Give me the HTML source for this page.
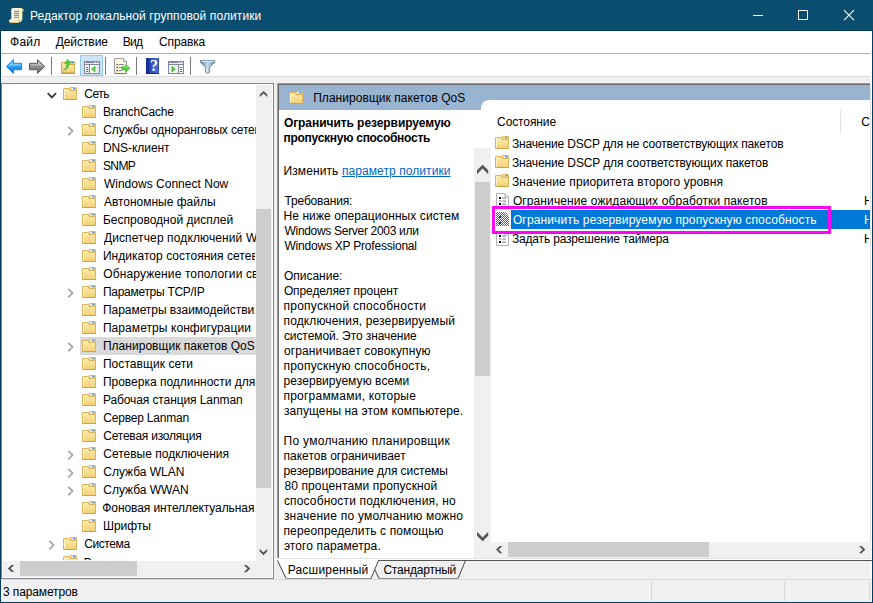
<!DOCTYPE html>
<html lang="ru"><head><meta charset="utf-8"><title>Редактор локальной групповой политики</title>
<style>
html,body{margin:0;padding:0}
body{width:873px;height:603px;position:relative;overflow:hidden;background:#f0f0f0;font-family:"Liberation Sans",sans-serif;font-size:12px;color:#000}
.ab{position:absolute;display:block}
.tx{position:absolute;white-space:nowrap;height:18px;line-height:18px;font-size:12px}
.wht{color:#fff}
.b{font-weight:bold}
.lnk{color:#0066cc;text-decoration:underline}
.tsel{position:absolute;background:#d9d9d9}
</style></head>
<body>
<svg width="0" height="0" style="position:absolute">
<defs>
<linearGradient id="fg" x1="0" y1="0" x2="0" y2="1"><stop offset="0" stop-color="#fdeeb0"/><stop offset="1" stop-color="#f1cf74"/></linearGradient>
<linearGradient id="bl" x1="0" y1="0" x2="0" y2="1"><stop offset="0" stop-color="#7fd0ff"/><stop offset="0.5" stop-color="#2a9df4"/><stop offset="1" stop-color="#0b6fd0"/></linearGradient>
<linearGradient id="gr" x1="0" y1="0" x2="0" y2="1"><stop offset="0" stop-color="#c8c8c8"/><stop offset="0.5" stop-color="#8c8c8c"/><stop offset="1" stop-color="#6e6e6e"/></linearGradient>
<linearGradient id="hb" x1="0" y1="0" x2="1" y2="0"><stop offset="0" stop-color="#1c2f9c"/><stop offset="1" stop-color="#4d7be0"/></linearGradient>
<linearGradient id="fu" x1="0" y1="0" x2="1" y2="0"><stop offset="0" stop-color="#5c7f9c"/><stop offset="0.5" stop-color="#c5d8e6"/><stop offset="1" stop-color="#6e8fa8"/></linearGradient>
<pattern id="dith" width="2" height="2" patternUnits="userSpaceOnUse"><rect width="2" height="2" fill="#fff"/><rect width="1" height="1" fill="#0078d7"/><rect x="1" y="1" width="1" height="1" fill="#0078d7"/></pattern>
<symbol id="fold" viewBox="0 0 14 14">
<path d="M7 3.5 V1 Q7 0.5 7.5 0.5 H13 Q13.5 0.5 13.5 1 V4 Z" fill="#f3d88a" stroke="#dcb660" stroke-width="1"/>
<rect x="8.5" y="1" width="2" height="1.2" fill="#fff"/><rect x="10.3" y="1" width="2" height="1.2" fill="#3b8ae6"/>
<path d="M0.5 2 Q0.5 1.5 1 1.5 H6 L7 3.5 H13.5 V12.5 H0.5 Z" fill="url(#fg)" stroke="#dab45c" stroke-width="1"/>
<path d="M1.5 2.5 V11.5" stroke="#fff4c8" stroke-width="1" fill="none"/>
<path d="M0.5 12.5 H13.5" stroke="#c9a349" stroke-width="1"/>
</symbol>
<symbol id="pol" viewBox="0 0 16 16">
<path d="M1.5 0.5 H10 L13.5 4 V14.5 H1.5 Z" fill="#fff" stroke="#b0b0b0" stroke-width="1"/>
<path d="M10 0.5 V4 H13.5" fill="none" stroke="#b0b0b0" stroke-width="1"/>
<rect x="4" y="4" width="2" height="2" fill="#111"/><rect x="4" y="7.2" width="2" height="1.4" fill="#8b8bb0"/><rect x="4" y="10" width="2" height="2" fill="#111"/>
<rect x="7" y="4.6" width="4" height="1" fill="#77779a"/><rect x="7" y="7.6" width="4" height="1" fill="#77779a"/><rect x="7" y="10.6" width="4" height="1" fill="#77779a"/>
</symbol>
<symbol id="polsel" viewBox="0 0 16 16">
<path d="M1 0 H10 L14 4 V14 H1 Z" fill="url(#dith)"/>
<rect x="4" y="4" width="2" height="2" fill="#0a3a80"/><rect x="4" y="10" width="2" height="2" fill="#0a3a80"/>
</symbol>
</defs>
</svg>

<!-- title bar -->
<div class="ab" style="left:0;top:0;width:873px;height:31px;background:#0a4d6e"></div>
<div class="ab" style="left:0;top:30px;width:873px;height:1px;background:#023b5c"></div>
<!-- window borders -->
<div class="ab" style="left:0;top:31px;width:1px;height:572px;background:#043e5f"></div>
<div class="ab" style="left:872px;top:31px;width:1px;height:572px;background:#043e5f"></div>
<div class="ab" style="left:0;top:602px;width:873px;height:1px;background:#043e5f"></div>
<!-- menu bar -->
<div class="ab" style="left:1px;top:31px;width:871px;height:22px;background:#fff"></div>
<div class="ab" style="left:1px;top:53px;width:869px;height:1px;background:#b0b0b0"></div>
<div class="ab" style="left:870px;top:53px;width:2px;height:1px;background:#fff"></div>
<!-- toolbar -->
<div class="ab" style="left:1px;top:54px;width:871px;height:22px;background:#fff"></div>
<div class="ab" style="left:2px;top:76px;width:868px;height:1px;background:#dcdcdc"></div>
<div class="ab" style="left:1px;top:76px;width:1px;height:7px;background:#fff"></div>
<div class="ab" style="left:870px;top:76px;width:2px;height:502px;background:#fff"></div>
<!-- tree pane -->
<div class="ab" style="left:1px;top:83px;width:273px;height:496px;background:#fff;border:1px solid #828790;box-sizing:border-box"></div>
<!-- right pane frame -->
<div class="ab" style="left:277px;top:83px;width:593px;height:475px;background:#a0a0a0"></div>
<div class="ab" style="left:278px;top:84px;width:592px;height:474px;background:#696969"></div>
<div class="ab" style="left:279px;top:85px;width:591px;height:473px;background:#fff"></div>
<div class="ab" style="left:870px;top:85px;width:1px;height:473px;background:#e3e3e3"></div>
<!-- header -->
<div class="ab" style="left:279px;top:85px;width:591px;height:25px;background:#99b4d1"></div>
<div class="ab" style="left:481px;top:100px;width:389px;height:20px;background:#fff;border-top-left-radius:8px"></div>
<svg class="ab" style="left:289px;top:91px" width="14" height="14" viewBox="0 0 14 14"><use href="#fold"/></svg>
<!-- desc scrollbar -->
<div class="ab" style="left:474px;top:148px;width:17px;height:410px;background:#f0f0f0"></div>
<div class="ab" style="left:475px;top:182px;width:15px;height:194px;background:#cdcdcd"></div>
<!-- list header separator -->
<div class="ab" style="left:840px;top:110px;width:1px;height:24px;background:#e5e5e5"></div>
<!-- list h scrollbar -->
<div class="ab" style="left:491px;top:542px;width:380px;height:16px;background:#f0f0f0"></div>
<div class="ab" style="left:508px;top:542px;width:201px;height:15px;background:#cdcdcd"></div>
<svg class="ab" style="left:470px;top:140px" width="410" height="430" viewBox="470 140 410 430"><g fill="#555">
<path d="M477 170.3 L482.6 164.7 L488.2 170.3 V174.2 L482.6 168.6 L477 174.2 Z"/>
<path d="M477 531.8 V535.7 L482.6 541.3 L488.2 535.7 V531.8 L482.6 537.4 Z"/>
<path d="M502.4 546 H499.7 L496 549.6 L499.7 553.2 H502.4 L498.7 549.6 Z"/>
<path d="M858.9 546 H861.6 L865.3 549.6 L861.6 553.2 H858.9 L862.6 549.6 Z"/>
</g></svg>
<!-- bottom of right pane -->
<div class="ab" style="left:279px;top:558px;width:591px;height:1px;background:#e3e3e3"></div>
<div class="ab" style="left:277px;top:559px;width:593px;height:1px;background:#fff"></div>
<div class="ab" style="left:378px;top:560px;width:494px;height:1px;background:#555"></div>
<!-- tabs -->
<svg class="ab" style="left:274px;top:558px" width="200" height="22" viewBox="0 0 200 22">
<path d="M3.5 1 L12 20.5 H97 L104.5 2.5 Z" fill="#fff"/>
<path d="M3.5 2.5 L12 20.5" stroke="#444" stroke-width="1" fill="none"/>
<path d="M12 20.5 H97.5" stroke="#8c8c8c" stroke-width="1" fill="none"/>
<path d="M97 20.5 L104.5 2.5" stroke="#444" stroke-width="1" fill="none"/>
<path d="M101 12 L105 20.5 H184 L191.5 2.5" stroke="#444" stroke-width="1" fill="none"/>
<path d="M105 20.5 H184" stroke="#8c8c8c" stroke-width="1" fill="none"/>
</svg>
<!-- status bar -->
<div class="ab" style="left:1px;top:579px;width:871px;height:1px;background:#dadada"></div>
<div class="ab" style="left:651px;top:582px;width:1px;height:19px;background:#d7d7d7"></div>
<div class="ab" style="left:784px;top:582px;width:1px;height:19px;background:#d7d7d7"></div>
<div class="ab" style="left:869px;top:582px;width:1px;height:19px;background:#d7d7d7"></div>
<svg class="ab" style="left:0;top:54px" width="222" height="24" viewBox="0 54 222 24">
<!-- back -->
<path d="M6.3 66.5 L13.5 59.6 V63.3 H21.5 V69.7 H13.5 V73.4 Z" fill="url(#bl)" stroke="#2286dc" stroke-width="1" stroke-linejoin="round"/>
<path d="M8 66.3 L12.6 62 V64.3 H20.5 V65.6 H12 Z" fill="#9adcff" opacity="0.8"/>
<!-- forward -->
<path d="M44.7 66.5 L37.5 59.6 V63.3 H29.5 V69.7 H37.5 V73.4 Z" fill="url(#gr)" stroke="#5c5c5c" stroke-width="1" stroke-linejoin="round"/>
<path d="M43 66.3 L38.4 62 V64.3 H30.5 V65.6 H39 Z" fill="#d0d0d0" opacity="0.7"/>
<!-- separators -->
<path d="M51.5 57 V75 M105.5 57 V75 M136.5 57 V75 M190.5 57 V75" stroke="#7a7a7a" stroke-width="1"/>
<!-- up folder -->
<g transform="translate(61,60.5)">
<path d="M7 3.5 V1.5 Q7 1 7.5 1 H13 Q13.5 1 13.5 1.5 V4 Z" fill="#f3d88a" stroke="#d3ab52" stroke-width="1"/>
<rect x="10.5" y="1.5" width="2" height="1.2" fill="#3b8ae6"/>
<path d="M0.5 2.5 Q0.5 2 1 2 H6 L7 4 H13.5 V12.7 H0.5 Z" fill="url(#fg)" stroke="#d3ab52" stroke-width="1"/>
<path d="M0.5 12.7 H13.5" stroke="#b98f3a" stroke-width="1"/>
<path d="M2.2 9.8 Q6.3 7.6 5.6 3 L3.6 3.4 L6.3 -1.2 L9.7 2.4 L7.8 2.6 Q8.4 8.6 2.2 9.8 Z" fill="#55cc40" stroke="#35a825" stroke-width="0.5"/>
</g>
<!-- highlighted button -->
<rect x="80.5" y="55.5" width="22" height="20" fill="#cce4f7" stroke="#92c8f3" stroke-width="1"/>
<!-- show/hide tree icon -->
<g transform="translate(84,61)">
<rect x="0.5" y="0.5" width="15" height="12" fill="#fff" stroke="#82879c" stroke-width="1"/>
<rect x="1" y="1" width="14" height="3.4" fill="#e9ebf2"/>
<path d="M1.5 1.5 H10.5 M12 1.5 H13 M14 1.5 H14.5" stroke="#82879c" stroke-width="1"/>
<path d="M1 3.5 H15" stroke="#82879c" stroke-width="1"/>
<path d="M5.5 4 V12" stroke="#82879c" stroke-width="1"/>
<path d="M2 6.5 H4.4 M2 8.5 H4.4 M2 10.5 H4.4" stroke="#2a6fd8" stroke-width="1"/>
<rect x="12" y="5" width="3" height="7" fill="#ededed"/>
<path d="M11 5.5 V10.8 L7.6 8.1 Z" fill="#6fd05a" stroke="#2fa81f" stroke-width="0.8"/>
</g>
<!-- export list -->
<g transform="translate(114,58)">
<path d="M0.5 0.5 H9.5 L12.5 3.5 V15.5 H0.5 Z" fill="#fdf7df" stroke="#9c9c9c" stroke-width="1"/>
<path d="M9.5 0.5 V3.5 H12.5" fill="#fff" stroke="#9c9c9c" stroke-width="1"/>
<path d="M0.5 15.5 H12.5" stroke="#777" stroke-width="1"/>
<rect x="2.6" y="6" width="1.2" height="1.2" fill="#222"/><rect x="2.6" y="9" width="1.2" height="1.2" fill="#222"/><rect x="2.6" y="12" width="1.2" height="1.2" fill="#222"/>
<path d="M5 6.6 H10 M5 9.6 H8 M5 12.6 H8" stroke="#7a78a8" stroke-width="1"/>
<path d="M8 8.7 H11.6 V6.4 L16 10.3 L11.6 14.2 V11.9 H8 Z" fill="#4ccb35" stroke="#3fb52b" stroke-width="0.5"/>
<path d="M9 9.8 H12.4 V8.6 L14.3 10.3 Z" fill="#a8ee98"/>
</g>
<!-- help -->
<g transform="translate(146,58)">
<rect x="0" y="0" width="13" height="16" fill="url(#hb)"/>
<rect x="0" y="0" width="3" height="16" fill="#1b2e98"/>
<rect x="0" y="15" width="13" height="1" fill="#15257e"/>
<rect x="12" y="0" width="1" height="16" fill="#2d49b4"/>
<text x="8" y="13.4" font-family="Liberation Serif, serif" font-weight="bold" font-size="16" fill="#fff" text-anchor="middle">?</text>
</g>
<!-- action pane icon -->
<g transform="translate(168,61)">
<rect x="0.5" y="0.5" width="15" height="12" fill="#fff" stroke="#82879c" stroke-width="1"/>
<rect x="1" y="1" width="14" height="3.4" fill="#e9ebf2"/>
<path d="M1.5 1.5 H10.5 M12 1.5 H13 M14 1.5 H14.5" stroke="#82879c" stroke-width="1"/>
<path d="M1 3.5 H15" stroke="#82879c" stroke-width="1"/>
<path d="M10.5 4 V12" stroke="#82879c" stroke-width="1"/>
<path d="M11.8 6.5 H14.2 M11.8 8.5 H14.2 M11.8 10.5 H14.2" stroke="#2a6fd8" stroke-width="1"/>
<rect x="1" y="5" width="9" height="7" fill="#f1f1f1"/>
<path d="M4 5.6 V10.8 L7.2 8.2 Z" fill="#6fd05a" stroke="#2fa81f" stroke-width="0.8"/>
</g>
<!-- filter funnel -->
<g transform="translate(200,60)">
<path d="M0.3 0.6 H14.7 V2.2 L9.4 7.6 V12.6 Q7.5 14 5.6 12.6 V7.6 L0.3 2.2 Z" fill="url(#fu)" stroke="#587a96" stroke-width="0.8"/>
<path d="M1.2 1.4 H13.8" stroke="#e6f0f6" stroke-width="1"/>
<path d="M7 8 V12.4" stroke="#e9f1f6" stroke-width="1.2"/>
</g>
</svg>
<!-- title icon -->
<svg class="ab" style="left:8px;top:6px" width="18" height="19" viewBox="8 6 18 19">
<defs><linearGradient id="pg" x1="0" y1="0" x2="1" y2="0"><stop offset="0" stop-color="#fffdf6"/><stop offset="1" stop-color="#fbefb4"/></linearGradient>
<linearGradient id="rl" x1="0" y1="0" x2="0" y2="1"><stop offset="0" stop-color="#f3dc96"/><stop offset="0.45" stop-color="#fffbe6"/><stop offset="1" stop-color="#e3bf62"/></linearGradient></defs>
<path d="M21.6 8.6 L23.4 8.9 Q24.4 9.6 23.8 10.8 L22.6 11.8 Z" fill="#d9ae45"/>
<path d="M11.3 9.6 Q11.4 8.2 13 8.1 H21.6 Q22.6 8.4 22.4 9.6 V19.6 L20.6 21.6 H11.3 Z" fill="url(#pg)"/>
<path d="M14 11.4 H19 M14 13.4 H19 M14 15.4 H19 M14 17.4 H19" stroke="#8c8cb4" stroke-width="1.1"/>
<path d="M20 19.4 L22.4 19.8 L20.4 22.4 Z" fill="#e9e4d4"/>
<rect x="9" y="19" width="11" height="3.9" rx="1.8" fill="url(#rl)"/>
<path d="M18.6 19.2 Q20.2 20.9 18.6 22.7" stroke="#b9a060" stroke-width="0.7" fill="none"/>
</svg>

<svg class="ab" style="left:47px;top:89.5px" width="10" height="10" viewBox="0 0 10 10"><path d="M0.7 3.2 L4.9 7.4 L9.1 3.2" fill="none" stroke="#3c3c3c" stroke-width="1.9"/></svg><svg class="ab" style="left:63px;top:87px" width="14" height="14" viewBox="0 0 14 14"><use href="#fold"/></svg><svg class="ab" style="left:82px;top:105px" width="14" height="14" viewBox="0 0 14 14"><use href="#fold"/></svg><svg class="ab" style="left:66.0px;top:126px" width="10" height="10" viewBox="0 0 10 10"><path d="M2.2 0.8 L6.6 5.1 L2.2 9.4" fill="none" stroke="#a8a8a8" stroke-width="1.8"/></svg><svg class="ab" style="left:82px;top:123px" width="14" height="14" viewBox="0 0 14 14"><use href="#fold"/></svg><svg class="ab" style="left:82px;top:141px" width="14" height="14" viewBox="0 0 14 14"><use href="#fold"/></svg><svg class="ab" style="left:82px;top:159px" width="14" height="14" viewBox="0 0 14 14"><use href="#fold"/></svg><svg class="ab" style="left:82px;top:177px" width="14" height="14" viewBox="0 0 14 14"><use href="#fold"/></svg><svg class="ab" style="left:82px;top:195px" width="14" height="14" viewBox="0 0 14 14"><use href="#fold"/></svg><svg class="ab" style="left:82px;top:213px" width="14" height="14" viewBox="0 0 14 14"><use href="#fold"/></svg><svg class="ab" style="left:82px;top:231px" width="14" height="14" viewBox="0 0 14 14"><use href="#fold"/></svg><svg class="ab" style="left:82px;top:249px" width="14" height="14" viewBox="0 0 14 14"><use href="#fold"/></svg><svg class="ab" style="left:82px;top:267px" width="14" height="14" viewBox="0 0 14 14"><use href="#fold"/></svg><svg class="ab" style="left:66.0px;top:288px" width="10" height="10" viewBox="0 0 10 10"><path d="M2.2 0.8 L6.6 5.1 L2.2 9.4" fill="none" stroke="#a8a8a8" stroke-width="1.8"/></svg><svg class="ab" style="left:82px;top:285px" width="14" height="14" viewBox="0 0 14 14"><use href="#fold"/></svg><svg class="ab" style="left:82px;top:303px" width="14" height="14" viewBox="0 0 14 14"><use href="#fold"/></svg><svg class="ab" style="left:82px;top:321px" width="14" height="14" viewBox="0 0 14 14"><use href="#fold"/></svg><div class="tsel" style="left:80px;top:337px;width:176px;height:18px"></div><svg class="ab" style="left:66.0px;top:342px" width="10" height="10" viewBox="0 0 10 10"><path d="M2.2 0.8 L6.6 5.1 L2.2 9.4" fill="none" stroke="#a8a8a8" stroke-width="1.8"/></svg><svg class="ab" style="left:82px;top:339px" width="14" height="14" viewBox="0 0 14 14"><use href="#fold"/></svg><svg class="ab" style="left:82px;top:357px" width="14" height="14" viewBox="0 0 14 14"><use href="#fold"/></svg><svg class="ab" style="left:82px;top:375px" width="14" height="14" viewBox="0 0 14 14"><use href="#fold"/></svg><svg class="ab" style="left:82px;top:393px" width="14" height="14" viewBox="0 0 14 14"><use href="#fold"/></svg><svg class="ab" style="left:82px;top:411px" width="14" height="14" viewBox="0 0 14 14"><use href="#fold"/></svg><svg class="ab" style="left:82px;top:429px" width="14" height="14" viewBox="0 0 14 14"><use href="#fold"/></svg><svg class="ab" style="left:66.0px;top:450px" width="10" height="10" viewBox="0 0 10 10"><path d="M2.2 0.8 L6.6 5.1 L2.2 9.4" fill="none" stroke="#a8a8a8" stroke-width="1.8"/></svg><svg class="ab" style="left:82px;top:447px" width="14" height="14" viewBox="0 0 14 14"><use href="#fold"/></svg><svg class="ab" style="left:66.0px;top:468px" width="10" height="10" viewBox="0 0 10 10"><path d="M2.2 0.8 L6.6 5.1 L2.2 9.4" fill="none" stroke="#a8a8a8" stroke-width="1.8"/></svg><svg class="ab" style="left:82px;top:465px" width="14" height="14" viewBox="0 0 14 14"><use href="#fold"/></svg><svg class="ab" style="left:66.0px;top:486px" width="10" height="10" viewBox="0 0 10 10"><path d="M2.2 0.8 L6.6 5.1 L2.2 9.4" fill="none" stroke="#a8a8a8" stroke-width="1.8"/></svg><svg class="ab" style="left:82px;top:483px" width="14" height="14" viewBox="0 0 14 14"><use href="#fold"/></svg><svg class="ab" style="left:82px;top:501px" width="14" height="14" viewBox="0 0 14 14"><use href="#fold"/></svg><svg class="ab" style="left:82px;top:519px" width="14" height="14" viewBox="0 0 14 14"><use href="#fold"/></svg><svg class="ab" style="left:46.5px;top:540px" width="10" height="10" viewBox="0 0 10 10"><path d="M2.2 0.8 L6.6 5.1 L2.2 9.4" fill="none" stroke="#a8a8a8" stroke-width="1.8"/></svg><svg class="ab" style="left:63px;top:537px" width="14" height="14" viewBox="0 0 14 14"><use href="#fold"/></svg><svg class="ab" style="left:63px;top:555px" width="14" height="14" viewBox="0 0 14 14"><use href="#fold"/></svg>
<svg class="ab" style="left:495px;top:136px" width="14" height="14" viewBox="0 0 14 14"><use href="#fold"/></svg><svg class="ab" style="left:495px;top:155px" width="14" height="14" viewBox="0 0 14 14"><use href="#fold"/></svg><svg class="ab" style="left:495px;top:174px" width="14" height="14" viewBox="0 0 14 14"><use href="#fold"/></svg><svg class="ab" style="left:495px;top:193px" width="16" height="16" viewBox="0 0 16 16"><use href="#pol"/></svg><div class="ab" style="left:511px;top:210px;width:359px;height:19px;background:#0078d7"></div><svg class="ab" style="left:495px;top:212px" width="16" height="16" viewBox="0 0 16 16"><use href="#polsel"/></svg><svg class="ab" style="left:495px;top:231px" width="16" height="16" viewBox="0 0 16 16"><use href="#pol"/></svg>
<div class="ab" style="left:256px;top:85px;width:16px;height:476px;background:#f0f0f0"></div>
<div class="ab" style="left:256px;top:209px;width:15px;height:279px;background:#cdcdcd"></div>
<!-- tree v-scroll arrows -->
<svg class="ab" style="left:256px;top:85px" width="17" height="476" viewBox="256 85 17 476"><g fill="#555">
<path d="M259.9 97.1 V94.4 L263.6 90.9 L267.3 94.4 V97.1 L263.6 93.6 Z"/>
<path d="M259.7 548.9 V551.6 L263.45 555.2 L267.2 551.6 V548.9 L263.45 552.5 Z"/>
</g></svg>

<div id="t0" class="tx wht" style="left:29.9px;top:7px;letter-spacing:0.097px;">Редактор локальной групповой политики</div>
<div id="t1" class="tx " style="left:10.1px;top:33px;letter-spacing:0.200px;">Файл</div>
<div id="t2" class="tx " style="left:55.7px;top:33px;letter-spacing:-0.071px;">Действие</div>
<div id="t3" class="tx " style="left:122.7px;top:33px;letter-spacing:-0.750px;">Вид</div>
<div id="t4" class="tx " style="left:159.1px;top:33px;letter-spacing:-0.150px;">Справка</div>
<div id="t5" class="tx tr" style="left:84.2px;top:85px;letter-spacing:-0.467px;width:171.4px;overflow:hidden;">Сеть</div>
<div id="t6" class="tx tr" style="left:102.9px;top:103px;letter-spacing:-0.170px;width:152.3px;overflow:hidden;">BranchCache</div>
<div id="t7" class="tx tr" style="left:103.3px;top:121px;letter-spacing:-0.150px;width:152.3px;overflow:hidden;">Службы одноранговых сетей Майкрософт</div>
<div id="t8" class="tx tr" style="left:102.9px;top:139px;letter-spacing:-0.056px;width:152.3px;overflow:hidden;">DNS-клиент</div>
<div id="t9" class="tx tr" style="left:102.9px;top:157px;letter-spacing:-0.567px;width:152.3px;overflow:hidden;">SNMP</div>
<div id="t10" class="tx tr" style="left:103.9px;top:175px;letter-spacing:0.017px;width:152.3px;overflow:hidden;">Windows Connect Now</div>
<div id="t11" class="tx tr" style="left:103.9px;top:193px;letter-spacing:-0.013px;width:152.3px;overflow:hidden;">Автономные файлы</div>
<div id="t12" class="tx tr" style="left:102.9px;top:211px;letter-spacing:0.016px;width:152.3px;overflow:hidden;">Беспроводной дисплей</div>
<div id="t13" class="tx tr" style="left:103.9px;top:229px;letter-spacing:0.120px;width:152.3px;overflow:hidden;">Диспетчер подключений Windows</div>
<div id="t14" class="tx tr" style="left:102.9px;top:247px;letter-spacing:0.033px;width:152.3px;overflow:hidden;">Индикатор состояния сетевого подключения</div>
<div id="t15" class="tx tr" style="left:103.3px;top:265px;letter-spacing:0.115px;width:152.3px;overflow:hidden;">Обнаружение топологии связи (Link-Layer)</div>
<div id="t16" class="tx tr" style="left:102.9px;top:283px;letter-spacing:-0.280px;width:152.3px;overflow:hidden;">Параметры TCP/IP</div>
<div id="t17" class="tx tr" style="left:102.9px;top:301px;letter-spacing:-0.032px;width:152.3px;overflow:hidden;">Параметры взаимодействия SSL</div>
<div id="t18" class="tx tr" style="left:102.9px;top:319px;letter-spacing:0.076px;width:152.3px;overflow:hidden;">Параметры конфигурации SSL</div>
<div id="t19" class="tx tr" style="left:102.9px;top:337px;letter-spacing:0.036px;width:152.3px;overflow:hidden;">Планировщик пакетов QoS</div>
<div id="t20" class="tx tr" style="left:102.9px;top:355px;letter-spacing:0.062px;width:152.3px;overflow:hidden;">Поставщик сети</div>
<div id="t21" class="tx tr" style="left:102.9px;top:373px;letter-spacing:-0.009px;width:152.3px;overflow:hidden;">Проверка подлинности для зоны хот-спота</div>
<div id="t22" class="tx tr" style="left:102.9px;top:391px;letter-spacing:-0.095px;width:152.3px;overflow:hidden;">Рабочая станция Lanman</div>
<div id="t23" class="tx tr" style="left:103.3px;top:409px;letter-spacing:-0.200px;width:152.3px;overflow:hidden;">Сервер Lanman</div>
<div id="t24" class="tx tr" style="left:103.3px;top:427px;letter-spacing:-0.227px;width:152.3px;overflow:hidden;">Сетевая изоляция</div>
<div id="t25" class="tx tr" style="left:103.3px;top:445px;letter-spacing:-0.006px;width:152.3px;overflow:hidden;">Сетевые подключения</div>
<div id="t26" class="tx tr" style="left:103.3px;top:463px;letter-spacing:-0.010px;width:152.3px;overflow:hidden;">Служба WLAN</div>
<div id="t27" class="tx tr" style="left:103.3px;top:481px;letter-spacing:-0.010px;width:152.3px;overflow:hidden;">Служба WWAN</div>
<div id="t28" class="tx tr" style="left:102.3px;top:499px;letter-spacing:-0.087px;width:152.3px;overflow:hidden;">Фоновая интеллектуальная служба передачи (BITS)</div>
<div id="t29" class="tx tr" style="left:102.9px;top:517px;letter-spacing:0.000px;width:152.3px;overflow:hidden;">Шрифты</div>
<div id="t30" class="tx tr" style="left:84.2px;top:535px;letter-spacing:-0.400px;width:171.4px;overflow:hidden;">Система</div>
<div id="t31" class="tx tr" style="left:83.8px;top:553.6px;letter-spacing:-0.031px;width:171.4px;overflow:hidden;">Все параметры</div>
<div id="t32" class="tx " style="left:313.2px;top:89px;letter-spacing:0.045px;">Планировщик пакетов QoS</div>
<div id="t33" class="tx b" style="left:283.9px;top:114px;letter-spacing:-0.061px;">Ограничить резервируемую</div>
<div id="t34" class="tx b" style="left:283.5px;top:129px;letter-spacing:-0.271px;">пропускную способность</div>
<div id="t35" class="tx " style="left:284.5px;top:192px;letter-spacing:-0.160px;">Требования:</div>
<div id="t36" class="tx " style="left:283.5px;top:207px;letter-spacing:0.077px;">Не ниже операционных систем</div>
<div id="t37" class="tx " style="left:284.5px;top:222px;letter-spacing:-0.305px;">Windows Server 2003 или</div>
<div id="t38" class="tx " style="left:284.5px;top:237px;letter-spacing:-0.214px;">Windows XP Professional</div>
<div id="t39" class="tx " style="left:283.9px;top:267px;letter-spacing:-0.000px;">Описание:</div>
<div id="t40" class="tx " style="left:283.9px;top:282px;letter-spacing:-0.100px;">Определяет процент</div>
<div id="t41" class="tx " style="left:283.5px;top:297px;letter-spacing:0.248px;">пропускной способности</div>
<div id="t42" class="tx " style="left:283.5px;top:312px;letter-spacing:0.136px;">подключения, резервируемый</div>
<div id="t43" class="tx " style="left:283.9px;top:327px;letter-spacing:-0.081px;">системой. Это значение</div>
<div id="t44" class="tx " style="left:283.9px;top:342px;letter-spacing:0.127px;">ограничивает совокупную</div>
<div id="t45" class="tx " style="left:283.5px;top:357px;letter-spacing:0.223px;">пропускную способность,</div>
<div id="t46" class="tx " style="left:283.5px;top:372px;letter-spacing:0.067px;">резервируемую всеми</div>
<div id="t47" class="tx " style="left:283.5px;top:387px;letter-spacing:0.221px;">программами, которые</div>
<div id="t48" class="tx " style="left:283.9px;top:402px;letter-spacing:0.111px;">запущены на этом компьютере.</div>
<div id="t49" class="tx " style="left:283.5px;top:432px;letter-spacing:0.291px;">По умолчанию планировщик</div>
<div id="t50" class="tx " style="left:283.5px;top:447px;letter-spacing:0.011px;">пакетов ограничивает</div>
<div id="t51" class="tx " style="left:283.5px;top:462px;letter-spacing:-0.064px;">резервирование для системы</div>
<div id="t52" class="tx " style="left:284.5px;top:477px;letter-spacing:0.104px;">80 процентами пропускной</div>
<div id="t53" class="tx " style="left:283.9px;top:492px;letter-spacing:0.165px;">способности подключения, но</div>
<div id="t54" class="tx " style="left:283.9px;top:507px;letter-spacing:0.223px;">значение по умолчанию можно</div>
<div id="t55" class="tx " style="left:283.5px;top:522px;letter-spacing:0.117px;">переопределить с помощью</div>
<div id="t56" class="tx " style="left:283.9px;top:537px;letter-spacing:0.107px;">этого параметра.</div>
<div id="t57" class="tx " style="left:283.5px;top:162px;letter-spacing:0.100px;">Изменить</div>
<div id="t58" class="tx lnk" style="left:341.9px;top:162px;letter-spacing:0.081px;">параметр политики</div>
<div id="t59" class="tx " style="left:497.1px;top:113px;letter-spacing:-0.112px;">Состояние</div>
<div id="t60" class="tx " style="left:861.3px;top:113px;letter-spacing:-0.031px;width:8.3px;overflow:hidden;">Состояние</div>
<div id="t61" class="tx " style="left:511.9px;top:135px;letter-spacing:-0.142px;">Значение DSCP для не соответствующих пакетов</div>
<div id="t62" class="tx " style="left:511.9px;top:154px;letter-spacing:-0.120px;">Значение DSCP для соответствующих пакетов</div>
<div id="t63" class="tx " style="left:511.9px;top:173px;letter-spacing:0.097px;">Значение приоритета второго уровня</div>
<div id="t64" class="tx " style="left:512.9px;top:192px;letter-spacing:0.103px;">Ограничение ожидающих обработки пакетов</div>
<div id="t65" class="tx " style="left:863.9px;top:192px;letter-spacing:-0.031px;width:5.3px;overflow:hidden;">Не задана</div>
<div id="t66" class="tx wht" style="left:512.9px;top:211px;letter-spacing:0.137px;">Ограничить резервируемую пропускную способность</div>
<div id="t67" class="tx wht" style="left:863.9px;top:211px;letter-spacing:-0.031px;width:5.3px;overflow:hidden;">Не задана</div>
<div id="t68" class="tx " style="left:511.9px;top:230px;letter-spacing:-0.167px;">Задать разрешение таймера</div>
<div id="t69" class="tx " style="left:863.9px;top:230px;letter-spacing:-0.031px;width:5.3px;overflow:hidden;">Не задана</div>
<div id="t70" class="tx " style="left:287.7px;top:560.5px;letter-spacing:0.200px;">Расширенный</div>
<div id="t71" class="tx " style="left:383.4px;top:560.5px;letter-spacing:-0.200px;">Стандартный</div>
<div id="t72" class="tx " style="left:3.0px;top:583px;letter-spacing:-0.118px;">3 параметров</div>
<!-- tree h scrollbar (covers partial last row) -->
<div class="ab" style="left:2px;top:560px;width:254px;height:18px;background:#fff"></div>
<div class="ab" style="left:256px;top:561px;width:17px;height:17px;background:#fff"></div>
<div class="ab" style="left:3px;top:561px;width:269px;height:16px;background:#f0f0f0"></div>
<div class="ab" style="left:2px;top:577px;width:271px;height:1px;background:#fff"></div>
<div class="ab" style="left:20px;top:561px;width:117px;height:15px;background:#cdcdcd"></div>
<svg class="ab" style="left:2px;top:561px" width="271" height="17" viewBox="2 561 271 17"><g fill="#555">
<path d="M14.2 564.9 H11.5 L7.8 568.5 L11.5 572.1 H14.2 L10.5 568.5 Z"/>
<path d="M243.8 564.9 H246.5 L250.3 568.55 L246.5 572.2 H243.8 L247.6 568.55 Z"/>
</g></svg>
<!-- magenta highlight -->
<div class="ab" style="left:492px;top:206px;width:339px;height:28px;border:3px solid #fc04f6;box-sizing:border-box"></div>
<!-- window controls -->
<svg class="ab" style="left:745px;top:0" width="127" height="31" viewBox="0 0 127 31">
<path d="M8 15.5 H18" stroke="#fff" stroke-width="1"/>
<rect x="53.5" y="10.5" width="9" height="9" fill="none" stroke="#fff" stroke-width="1"/>
<path d="M99 10.2 L109 20.2 M109 10.2 L99 20.2" stroke="#fff" stroke-width="1.1"/>
</svg>

</body></html>
